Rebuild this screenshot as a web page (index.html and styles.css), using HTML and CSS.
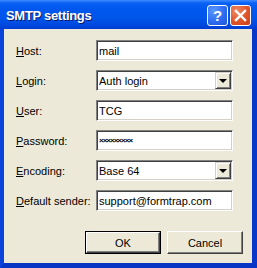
FILE: index.html
```html
<!DOCTYPE html>
<html>
<head>
<meta charset="utf-8">
<link rel="stylesheet" href="styles.css">
</head>
<body>
<div class="window">
  <div class="titlebar">
    <span class="title">SMTP settings</span>
    <div class="tb-buttons">
      <span class="tb-btn help">?</span>
      <span class="tb-btn close">
        <svg width="13" height="13" viewBox="0 0 13 13"><path d="M2 2 L11 11 M11 2 L2 11" stroke="#fff" stroke-width="2.4" stroke-linecap="square" fill="none"/></svg>
      </span>
    </div>
  </div>
  <div class="frame">
    <div class="client">
      <div class="form">
        <label class="lbl"><u>H</u>ost:</label>
        <div class="field"><span class="val">mail</span></div>
        <label class="lbl"><u>L</u>ogin:</label>
        <div class="field combo"><span class="val">Auth login</span><span class="drop"><span class="tri"></span></span></div>
        <label class="lbl"><u>U</u>ser:</label>
        <div class="field"><span class="val">TCG</span></div>
        <label class="lbl"><u>P</u>assword:</label>
        <div class="field"><span class="val pw">×××××××××</span></div>
        <label class="lbl"><u>E</u>ncoding:</label>
        <div class="field combo"><span class="val">Base 64</span><span class="drop"><span class="tri"></span></span></div>
        <label class="lbl"><u>D</u>efault sender:</label>
        <div class="field"><span class="val">support@formtrap.com</span></div>
      </div>
      <div class="actions">
        <span class="btn default"><span class="btn-face">OK</span></span>
        <span class="btn"><span class="btn-face">Cancel</span></span>
      </div>
    </div>
  </div>
</div>
</body>
</html>
```

FILE: styles.css
```css
html, body {
  margin: 0;
  padding: 0;
  background: #ffffff;
}
.window {
  width: 257px;
  height: 268px;
  display: flex;
  flex-direction: column;
  font-family: "Liberation Sans", Arial, sans-serif;
  font-size: 11px;
  color: #000;
}
.titlebar {
  height: 29px;
  flex: none;
  display: flex;
  align-items: center;
  justify-content: space-between;
  background: linear-gradient(#3d8cff 0px, #0a62f5 3px, #0058ee 8px, #0055eb 18px, #0049df 25px, #003cd2 29px);
  padding: 0 6px 0 6px;
  box-sizing: border-box;
}
.title {
  color: #fff;
  font-weight: bold;
  font-size: 13px;
  letter-spacing: -0.3px;
  text-shadow: 1px 1px 0 #0a1a6a;
  margin-top: 1px;
}
.tb-buttons {
  display: flex;
  gap: 2px;
  margin-top: 2px;
}
.tb-btn {
  width: 21px;
  height: 21px;
  box-sizing: border-box;
  border: 1px solid #fff;
  border-radius: 3px;
  display: flex;
  align-items: center;
  justify-content: center;
  color: #fff;
  font-weight: bold;
  font-size: 15px;
}
.help {
  background: radial-gradient(circle at 30% 25%, #5a98ff 0%, #2f6df0 55%, #1f55d8 100%);
}
.close {
  background: radial-gradient(circle at 30% 25%, #f08a66 0%, #e0542a 55%, #c8401a 100%);
}
.frame {
  flex: 1;
  display: flex;
  border-left: 4px solid #0b44dc;
  border-right: 5px solid #0838c8;
  border-bottom: 5px solid #0836c4;
}
.client {
  flex: 1;
  background: #ece9d8;
  padding: 11px 0 0 12px;
  display: flex;
  flex-direction: column;
}
.form {
  display: grid;
  grid-template-columns: 80px 137px;
  grid-auto-rows: 21px;
  row-gap: 9px;
  align-items: center;
}
.lbl {
  white-space: nowrap;
}
.field {
  height: 21px;
  box-sizing: border-box;
  background: #fff;
  border: 1px solid;
  border-color: #808080 #ffffff #ffffff #808080;
  box-shadow: inset 1px 1px 0 #404040, inset -1px -1px 0 #d4d0c8;
  display: flex;
  align-items: center;
  padding: 1px 1px 1px 2px;
}
.val {
  flex: 1;
  white-space: nowrap;
  overflow: hidden;
}
.pw {
  font-size: 8px;
  font-weight: bold;
  letter-spacing: -1px;
  line-height: 9px;
}
.drop {
  width: 16px;
  height: 17px;
  box-sizing: border-box;
  background: #ece9d8;
  border: 1px solid;
  border-color: #d4d0c8 #404040 #404040 #d4d0c8;
  box-shadow: inset 1px 1px 0 #fff, inset -1px -1px 0 #808080;
  display: flex;
  align-items: center;
  justify-content: center;
}
.tri {
  width: 0;
  height: 0;
  border-left: 4px solid transparent;
  border-right: 4px solid transparent;
  border-top: 4px solid #000;
  margin-top: 1px;
}
.actions {
  display: flex;
  justify-content: flex-end;
  gap: 6px;
  padding-right: 9px;
  margin-top: 20px;
}
.btn {
  width: 76px;
  height: 23px;
  box-sizing: border-box;
  display: flex;
}
.btn-face {
  flex: 1;
  display: flex;
  align-items: center;
  justify-content: center;
  background: #ece9d8;
  border: 1px solid;
  border-color: #ffffff #404040 #404040 #ffffff;
  box-shadow: inset -1px -1px 0 #808080;
}
.btn.default {
  border: 1px solid #000;
}
```
